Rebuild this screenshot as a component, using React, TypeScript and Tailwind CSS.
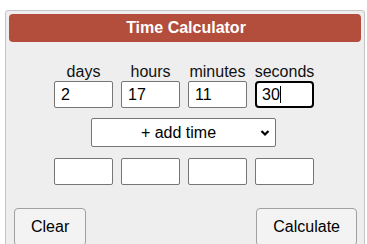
import React from "react";

const cols = [
  { label: "days", value: "2" },
  { label: "hours", value: "17" },
  { label: "minutes", value: "11" },
  { label: "seconds", value: "30", focused: true },
];

function Box({ value, focused }: { value?: string; focused?: boolean }) {
  if (focused) {
    return (
      <div className="w-[59px] h-[27px] bg-white border-2 border-black rounded-[4px] pl-[5px] flex items-center text-[16px] text-black leading-none">
        <span>{value}</span>
        <span className="inline-block w-px h-[17px] bg-black" />
      </div>
    );
  }
  return (
    <div className="w-[59px] h-[27px] bg-white border border-[#767676] rounded-[2px] pl-[6px] flex items-center text-[16px] text-black leading-none">
      {value}
    </div>
  );
}

export default function App() {
  return (
    <div
      className="w-[367px] h-[244px] bg-white overflow-hidden pt-[10px] pl-[5px]"
      style={{ fontFamily: '"Liberation Sans", Arial, sans-serif' }}
    >
      <div className="w-[360px] h-[260px] bg-[#eeeeee] border border-[#c4c4c4] rounded-[3px] p-[3px]">
        <div className="h-[28px] bg-[#b34e3d] rounded-[4px] flex items-center justify-center text-white font-bold text-[16px] pl-[2px]">
          Time Calculator
        </div>
        <div className="mt-[20px] flex justify-center gap-[8px] pr-[2px]">
          {cols.map((c) => (
            <div key={c.label} className="w-[59px] flex flex-col items-center">
              <div className="text-[16px] leading-[19px] text-[#111] whitespace-nowrap">{c.label}</div>
              <Box value={c.value} focused={c.focused} />
            </div>
          ))}
        </div>
        <div className="mt-[10px] flex justify-center pr-[4px]">
          <div className="w-[185px] h-[29px] bg-white border border-[#767676] rounded-[2px] flex items-center text-[16px] text-black">
            <div className="flex-1 text-center pl-[6px]">+ add time</div>
            <svg width="10" height="8" viewBox="0 0 10 8" className="mr-[5px]">
              <path d="M1.5 2 L5 5.5 L8.5 2" fill="none" stroke="black" strokeWidth="2.2" />
            </svg>
          </div>
        </div>
        <div className="mt-[11px] flex justify-center gap-[8px] pr-[2px]">
          {cols.map((c) => (
            <Box key={c.label} />
          ))}
        </div>
        <div className="mt-[23px] flex justify-between pl-[5px] pr-[4px]">
          <button className="h-[38px] px-[16px] bg-[#f3f3f3] border border-[#a0a0a0] rounded-[4px] text-[16px] text-black">
            Clear
          </button>
          <button className="h-[38px] px-[16px] bg-[#f3f3f3] border border-[#a0a0a0] rounded-[4px] text-[16px] text-black">
            Calculate
          </button>
        </div>
      </div>
    </div>
  );
}
